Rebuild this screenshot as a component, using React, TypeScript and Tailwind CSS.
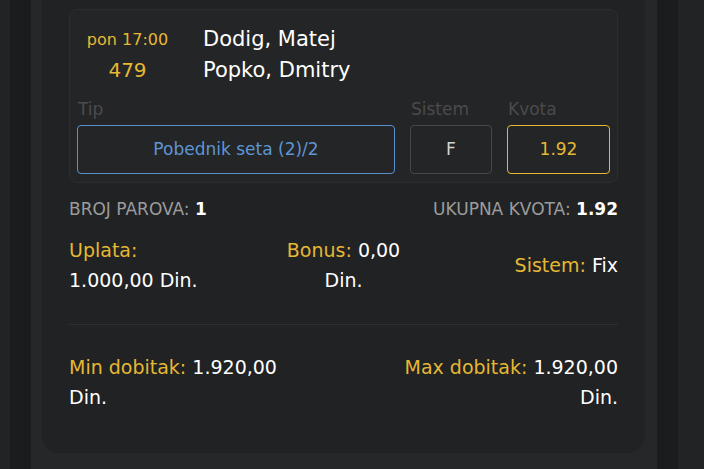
const App = () => {
  return (
    <div className="flex h-[469px] w-[704px] overflow-hidden bg-[#222324] font-['DejaVu_Sans',sans-serif]">
      <div className="w-[10px] shrink-0 bg-[#222324]" />
      <div className="w-[21px] shrink-0 bg-[#1b1c1e]" />
      <div className="w-[626px] shrink-0 bg-[#262728] pl-[11px] pr-[12px]">
        <div className="h-[453px] rounded-b-[18px] bg-[#212223] px-[27px] pt-[9px]">
          <div className="rounded-[8px] border border-[#2c2d2f] bg-[#242526] px-[7px] pb-[8px] pt-[14px]">
            <div className="flex items-center">
              <div className="mr-[25px] flex w-[101px] flex-col items-center text-[#e5b834]">
                <span className="text-[16px] leading-[31px]">pon 17:00</span>
                <span className="text-[20px] leading-[31px]">479</span>
              </div>
              <div className="flex flex-col text-[21px] text-white">
                <span className="leading-[31px]">Dodig, Matej</span>
                <span className="leading-[31px]">Popko, Dmitry</span>
              </div>
            </div>
            <div className="mt-[11px] flex gap-[15px]">
              <div className="flex flex-1 flex-col">
                <span className="pl-[1px] text-[17px] leading-[24px] text-[#4a4b4d]">Tip</span>
                <div className="mt-[4px] flex h-[49px] items-center justify-center rounded-[4px] border border-[#5b8fd0] text-[17px] text-[#5d95d5]">
                  Pobednik seta (2)/2
                </div>
              </div>
              <div className="flex w-[82px] flex-col">
                <span className="pl-[1px] text-[17px] leading-[24px] text-[#4a4b4d]">Sistem</span>
                <div className="mt-[4px] flex h-[49px] items-center justify-center rounded-[4px] border border-[#46474a] text-[17px] text-[#d4d4d4]">
                  F
                </div>
              </div>
              <div className="flex w-[103px] flex-col">
                <span className="pl-[1px] text-[17px] leading-[24px] text-[#4a4b4d]">Kvota</span>
                <div className="mt-[4px] flex h-[49px] items-center justify-center rounded-[4px] border border-[#e5b834] text-[17px] text-[#e5b834]">
                  1.92
                </div>
              </div>
            </div>
          </div>

          <div className="mt-[15px] flex justify-between text-[17px] uppercase leading-[22px] text-[#9b9c9e]">
            <span>
              Broj parova: <span className="font-semibold text-white">1</span>
            </span>
            <span>
              Ukupna kvota: <span className="font-semibold text-white">1.92</span>
            </span>
          </div>

          <div className="mt-[15px] grid grid-cols-3 text-[19px] leading-[30px] text-white">
            <div>
              <span className="text-[#e5b834]">Uplata:</span>
              <br />
              1.000,00 Din.
            </div>
            <div className="text-center">
              <span className="text-[#e5b834]">Bonus:</span> 0,00
              <br />
              Din.
            </div>
            <div className="flex items-center justify-end">
              <span>
                <span className="text-[#e5b834]">Sistem:</span> Fix
              </span>
            </div>
          </div>

          <div className="mt-[29px] h-px bg-[#2e2f31]" />

          <div className="mt-[27px] flex justify-between text-[19px] leading-[30px] text-white">
            <div>
              <span className="text-[#e5b834]">Min dobitak:</span> 1.920,00
              <br />
              Din.
            </div>
            <div className="text-right">
              <span className="text-[#e5b834]">Max dobitak:</span> 1.920,00
              <br />
              Din.
            </div>
          </div>
        </div>
      </div>
      <div className="w-[21px] shrink-0 bg-[#1b1c1e]" />
      <div className="flex-1 bg-[#222324]" />
    </div>
  );
};

export default App;
